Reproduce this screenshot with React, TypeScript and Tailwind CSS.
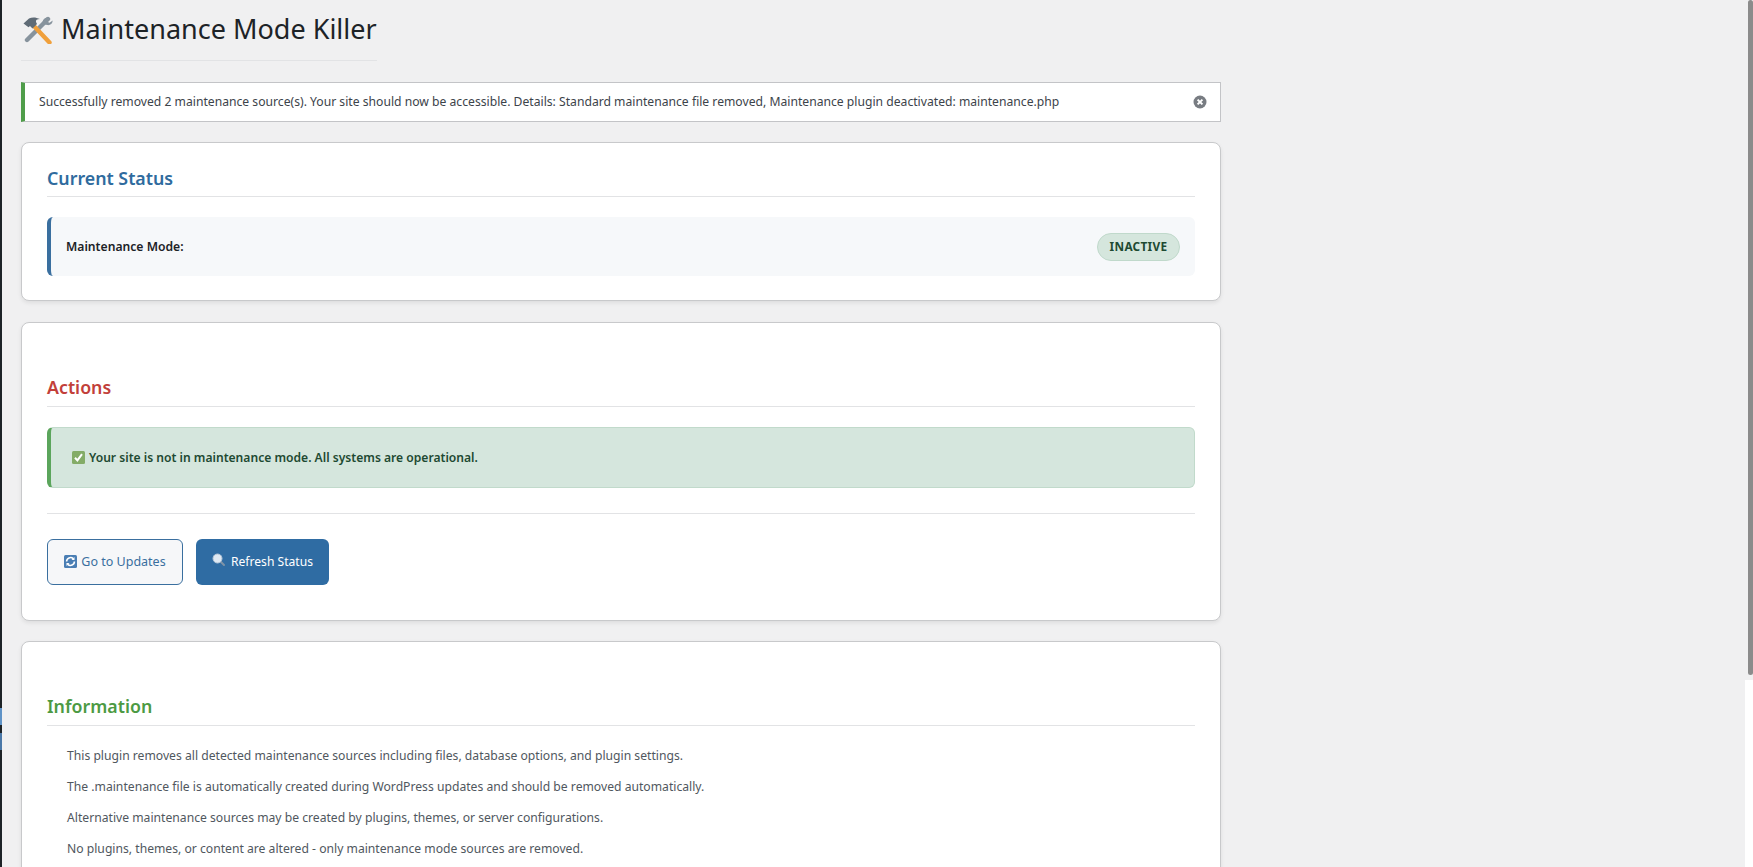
import React from "react";

const font = "font-['Noto_Sans','Open_Sans',sans-serif]";

const ToolsIcon = () => (
  <svg width="31" height="28" viewBox="0 0 31 28" className="shrink-0">
    <path d="M26 3L5 24" stroke="#87939d" strokeWidth="4.4" strokeLinecap="round" />
    <path d="M24.5 1.5c-3 .8-4.6 3.6-3.4 6.6l4 1c3 .6 5.4-1.4 5.6-4.6l-3.2 2.2-2.6-1.2-.2-2.6 2.6-2z" fill="#87939d" />
    <path d="M10 8l17.5 18.5" stroke="#f0a03c" strokeWidth="4.4" strokeLinecap="round" />
    <path d="M1.5 7.5L7 2.5c3-1.6 7-1.4 11 .5-3 0-4.5 1-4 3l1 2-4.500 4.500-2.500-2.500-1.500 1.200z" fill="#5f6b76" />
  </svg>
);

const CheckIcon = () => (
  <svg width="13" height="13" viewBox="0 0 13 13" className="shrink-0">
    <rect width="13" height="13" rx="1.500" fill="#84ac67" />
    <path d="M3 6.800l2.400 2.600L10 3.200" fill="none" stroke="#fff" strokeWidth="2" />
  </svg>
);

const RefreshIcon = () => (
  <svg width="13" height="13" viewBox="0 0 13 13" className="shrink-0 -translate-y-[1px]">
    <rect width="13" height="13" rx="1.500" fill="#4a7eb4" />
    <path d="M2.600 6.500a3.900 3.900 0 0 1 6.600-2.800M10.400 6.500a3.900 3.900 0 0 1-6.600 2.800" fill="none" stroke="#fff" strokeWidth="1.600" />
    <path d="M10.500 2v3H7.500zM2.500 11V8h3z" fill="#fff" />
  </svg>
);

const SearchIcon = () => (
  <svg width="14" height="14" viewBox="0 0 14 14" className="shrink-0 -translate-y-[2px]">
    <path d="M8 8l4 4" stroke="#7f93a6" strokeWidth="2" strokeLinecap="round" />
    <circle cx="5.500" cy="5.500" r="4.500" fill="#dfe9f3" stroke="#b5c6d8" strokeWidth="1" />
  </svg>
);

const CloseIcon = () => (
  <svg width="14" height="14" viewBox="0 0 14 14">
    <circle cx="7" cy="7" r="6.500" fill="#787c82" />
    <path d="M4.600 4.600l4.800 4.800M9.400 4.600l-4.800 4.800" stroke="#fff" strokeWidth="2" />
  </svg>
);

const Card: React.FC<{ className?: string; children: React.ReactNode }> = ({ className, children }) => (
  <section className={`rounded-lg border border-[#c8c9cb] bg-white px-[25px] shadow-[0_2px_4px_rgba(0,0,0,0.08)] ${className ?? ""}`}>
    {children}
  </section>
);

const Heading: React.FC<{ color: string; children: React.ReactNode }> = ({ color, children }) => (
  <h2 className={`border-b border-[#e2e3e5] text-[17.800px] leading-[27px] font-semibold ${color}`}>{children}</h2>
);

const infoLines = [
  "This plugin removes all detected maintenance sources including files, database options, and plugin settings.",
  "The .maintenance file is automatically created during WordPress updates and should be removed automatically.",
  "Alternative maintenance sources may be created by plugins, themes, or server configurations.",
  "No plugins, themes, or content are altered - only maintenance mode sources are removed.",
];

export default function App() {
  return (
    <div className={`relative h-[867px] w-[1753px] overflow-hidden bg-[#f0f0f1] text-[12.160px] text-[#3c434a] ${font}`}>
      <div className="absolute top-0 left-0 h-full w-[2px] bg-[#1d2327]" />
      <div className="absolute top-[708px] left-0 h-[17px] w-[2px] bg-[#5f93c7]" />
      <div className="absolute top-[733px] left-0 h-[17px] w-[2px] bg-[#4a78a8]" />
      <div className="absolute top-0 right-0 h-[675px] w-[5px] rounded-sm bg-[#8b8b8b]" />
      <div className="absolute right-0 bottom-0 h-[187px] w-[8px] bg-white" />

      <main className="ml-[21px] w-[1200px]">
        <h1 className="mb-[21px] flex h-[61px] w-[356px] items-center gap-[8px] border-b border-[#e2e3e5] pb-[1px] pl-px text-[27px] font-normal whitespace-nowrap text-[#1d2327]">
          <ToolsIcon />
          Maintenance Mode Killer
        </h1>

        <div className="mb-[20px] flex h-[40px] items-center justify-between border border-l-[4px] border-[#c3c4c7] border-l-[#4f9d4a] bg-white pr-[13px] pl-[14px]">
          <p className="pt-px">Successfully removed 2 maintenance source(s). Your site should now be accessible. Details: Standard maintenance file removed, Maintenance plugin deactivated: maintenance.php</p>
          <CloseIcon />
        </div>

        <Card className="mb-[21px] h-[159px] pt-[22px]">
          <div className="pb-0">
            <Heading color="pb-[4px] text-[#2f6b9e]">Current Status</Heading>
          </div>
          <div className="mt-[20px] flex h-[59px] items-center justify-between rounded-md border-l-[4px] border-[#3a6f9f] bg-[#f6f8fa] pr-[15px] pl-[15px]">
            <span className="pt-px font-semibold text-[#1d2327]">Maintenance Mode:</span>
            <span className="flex h-[28px] w-[83px] items-center justify-center rounded-full border border-[#c0d9cb] bg-[#d5e6dd] text-[11.800px] font-bold tracking-[0.3px] text-[#1e4a32]">INACTIVE</span>
          </div>
        </Card>

        <Card className="mb-[20px] h-[299px] pt-[51px]">
          <Heading color="pb-[5px] text-[#c23f3a]">Actions</Heading>
          <div className="mt-[20px] flex h-[61px] items-center gap-[4px] rounded-md border border-l-[4px] border-[#c1dacb] border-l-[#5ba55c] bg-[#d5e6dd] pl-[21px] text-[12.100px] font-semibold text-[#1e4a32]">
            <CheckIcon />
            <span className="pt-px">Your site is not in maintenance mode. All systems are operational.</span>
          </div>
          <hr className="mt-[25px] border-[#e2e3e5]" />
          <div className="mt-[25px] flex gap-[13px]">
            <button className="flex h-[46px] w-[136px] items-center justify-center gap-[4px] rounded-md border border-[#3a6f9f] bg-[#f6f7f9] text-[12.500px] text-[#3a6f9f]">
              <RefreshIcon />
              <span className="pt-px">Go to Updates</span>
            </button>
            <button className="flex h-[46px] w-[133px] items-center justify-center gap-[5px] rounded-md bg-[#2f6ca3] text-[12.100px] text-white">
              <SearchIcon />
              <span className="pt-px">Refresh Status</span>
            </button>
          </div>
        </Card>

        <Card className="h-[300px] pt-[51px]">
          <Heading color="pb-[5px] text-[#4c9a43]">Information</Heading>
          <ul className="mt-[14px] flex flex-col pl-[20px] text-[#50575e]">
            {infoLines.map((line) => (
              <li key={line} className="leading-[31px]">{line}</li>
            ))}
          </ul>
        </Card>
      </main>
    </div>
  );
}
